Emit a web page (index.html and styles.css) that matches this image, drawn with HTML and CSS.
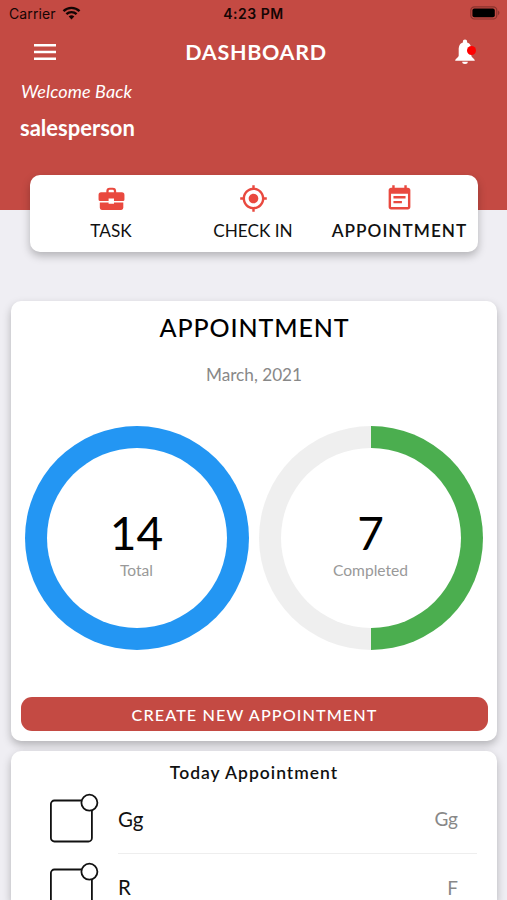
FILE: index.html
```html
<!DOCTYPE html>
<html lang="en">
<head>
    <meta charset="UTF-8">
    <meta name="viewport" content="width=device-width, initial-scale=1.0">
    <title>Dashboard</title>
    <link rel="stylesheet" href="styles.css">
</head>
<body>
    <header class="header">
        <div class="status-bar">
            <div class="carrier">
                <span>Carrier</span>
                <svg class="wifi" viewBox="0 0 18 14">
                    <path d="M1 5.2a11.4 11.4 0 0 1 16 0" />
                    <path d="M3.9 8.2a7.2 7.2 0 0 1 10.2 0" />
                    <path class="wifi-dot" d="M6.2 10.6a4 4 0 0 1 5.6 0L9 13.6z" />
                </svg>
            </div>
            <div class="time">4:23 PM</div>
            <div class="battery-box">
                <svg class="battery" viewBox="0 0 30 14">
                    <rect class="battery-case" x=".8" y=".8" width="26" height="12.2" rx="3.6" />
                    <rect x="2.4" y="2.6" width="22.4" height="8.6" rx="2" />
                    <path class="battery-tip" d="M28 4.6c2 1 2 3.6 0 4.6z" />
                </svg>
            </div>
        </div>

        <div class="nav-bar">
            <svg class="menu-icon" viewBox="0 0 22 16">
                <path d="M0 1.3h22M0 8h22M0 14.7h22" />
            </svg>
            <h1>DASHBOARD</h1>
            <div class="bell">
                <svg viewBox="0 0 22 26">
                    <path d="M11 .5c-1.3 0-2.100.9-2.100 2.100v1C5.600 4.500 4.700 7.500 4.700 11v5.500C4.700 18.500 1.200 19.500 1.200 21.800h19.600c0-2.300-3.500-3.300-3.500-5.300V11c0-3.500-.9-6.500-4.200-7.400v-1C13.100 1.400 12.300.5 11 .5zM8.200 22.800a2.800 2.200 0 0 0 5.600 0z" />
                </svg>
                <span class="bell-dot"></span>
            </div>
        </div>

        <p class="welcome">Welcome Back</p>
        <p class="username">salesperson</p>
    </header>

    <nav class="tabs">
        <a class="tab">
            <svg viewBox="0 0 28 28">
                <path d="M9 8V6.800A3.300 3.300 0 0 1 12.300 3.500h2.900a3.300 3.300 0 0 1 3.300 3.300V8H24A2.500 2.500 0 0 1 26.500 10.500V15a1.500 1.500 0 0 1-1.500 1.500h-8.600v-2.600h-5.200v2.600H3A1.500 1.500 0 0 1 1.500 15v-4.500A2.500 2.500 0 0 1 4 8zm2.200 0h5.100V6.800A1.300 1.300 0 0 0 15 5.500h-2.500a1.300 1.300 0 0 0-1.300 1.300z" />
                <path d="M2.700 17.800h8.500v1.200h5.200v-1.200h9V23a2 2 0 0 1-2 2H4.700a2 2 0 0 1-2-2z" />
            </svg>
            <span>TASK</span>
        </a>
        <a class="tab">
            <svg viewBox="0 0 24 24">
                <path d="M12 8c-2.210 0-4 1.790-4 4s1.790 4 4 4 4-1.790 4-4-1.790-4-4-4zm8.940 3c-.46-4.170-3.770-7.480-7.940-7.940V1h-2v2.060C6.830 3.520 3.520 6.830 3.060 11H1v2h2.060c.46 4.170 3.770 7.480 7.940 7.940V23h2v-2.060c4.170-.46 7.480-3.770 7.940-7.940H23v-2h-2.060zM12 19c-3.870 0-7-3.130-7-7s3.130-7 7-7 7 3.130 7 7-3.130 7-7 7z" />
            </svg>
            <span>CHECK IN</span>
        </a>
        <a class="tab active">
            <svg viewBox="0 0 24 24">
                <path d="M17 10H7v2h10v-2zm2-7h-1V1h-2v2H8V1H6v2H5c-1.110 0-1.990.9-1.990 2L3 19c0 1.100.89 2 2 2h14c1.100 0 2-.9 2-2V5c0-1.100-.9-2-2-2zm0 16H5V8h14v11zm-5-5H7v2h7v-2z" />
            </svg>
            <span>APPOINTMENT</span>
        </a>
    </nav>

    <main>
        <section class="card summary">
            <h2>APPOINTMENT</h2>
            <p class="month">March, 2021</p>
            <div class="charts">
                <div class="ring total">
                    <div class="ring-inner">
                        <span class="count">14</span>
                        <span class="label">Total</span>
                    </div>
                </div>
                <div class="ring completed">
                    <div class="ring-inner">
                        <span class="count">7</span>
                        <span class="label">Completed</span>
                    </div>
                </div>
            </div>
            <button class="create">CREATE NEW APPOINTMENT</button>
        </section>

        <section class="card today">
            <h3>Today Appointment</h3>
            <div class="row">
                <svg class="item-icon" viewBox="0 0 50 50">
                    <rect x="1.900" y="7.500" width="41" height="41" rx="3.500" />
                    <circle cx="40.400" cy="9.700" r="8" />
                </svg>
                <div class="row-body">
                    <span>Gg</span>
                    <span class="note">Gg</span>
                </div>
            </div>
            <div class="row">
                <svg class="item-icon" viewBox="0 0 50 50">
                    <rect x="1.900" y="7.500" width="41" height="41" rx="3.500" />
                    <circle cx="40.400" cy="9.700" r="8" />
                </svg>
                <div class="row-body">
                    <span>R</span>
                    <span class="note">F</span>
                </div>
            </div>
        </section>
    </main>
</body>
</html>
```
FILE: styles.css
```css
* {
    box-sizing: border-box;
}
body {
    margin: 0;
    height: 900px;
    overflow: hidden;
    background-color: #efeef3;
    font-family: Lato, sans-serif;
    color: #111;
}
h1, h2, h3, p {
    margin: 0;
}
.header {
    height: 210px;
    background-color: #c44a43;
    color: #fff;
}
.status-bar {
    display: grid;
    grid-template-columns: 1fr auto 1fr;
    align-items: center;
    height: 28px;
    padding: 0 6px 2px 9px;
    font-family: Inter, sans-serif;
    font-size: 14px;
    color: #140504;
}
.carrier {
    display: flex;
    align-items: center;
    gap: 6px;
    letter-spacing: 0.1px;
}
.wifi {
    width: 19px;
    height: 14px;
    margin-top: -1px;
    fill: none;
    stroke: #140504;
    stroke-width: 2.4;
}
.wifi-dot {
    fill: #140504;
    stroke: none;
}
.time {
    margin-right: 3px;
    font-weight: 600;
    letter-spacing: 0.5px;
}
.battery-box {
    display: flex;
    justify-content: flex-end;
}
.battery {
    width: 32px;
    height: 14px;
}
.battery-case {
    fill: none;
    stroke: #8a332e;
    stroke-width: 1.2;
}
.battery-tip {
    fill: #8a332e;
}
.nav-bar {
    display: flex;
    justify-content: space-between;
    align-items: center;
    height: 48px;
    padding: 0 31px 0 34px;
}
.menu-icon {
    width: 22px;
    height: 16px;
    stroke: #fff;
    stroke-width: 2.4;
}
h1 {
    padding-left: 2px;
    font-size: 21.5px;
    font-weight: 700;
    letter-spacing: 0.7px;
}
.bell {
    position: relative;
    width: 22px;
    height: 26px;
}
.bell svg {
    display: block;
    fill: #fff;
}
.bell-dot {
    position: absolute;
    top: 7px;
    right: 0;
    width: 9px;
    height: 9px;
    border-radius: 50%;
    background-color: #f00;
}
.welcome {
    padding: 4px 21px 0;
    font-size: 18px;
    font-style: italic;
    letter-spacing: 0.1px;
    line-height: 22px;
}
.username {
    padding: 12px 20px 0;
    font-size: 22px;
    font-weight: 700;
    line-height: 28px;
}
.tabs {
    position: relative;
    display: grid;
    grid-template-columns: 142px 142px 1fr;
    width: 448px;
    height: 77px;
    margin: -35px auto 49px 30px;
    padding: 9px 3px 0 10px;
    background-color: #fff;
    border-radius: 10px;
    box-shadow: 0 4px 8px rgba(0, 0, 0, 0.25);
}
.tab {
    display: flex;
    flex-direction: column;
    align-items: center;
    gap: 6px;
    font-size: 17.2px;
    line-height: 24px;
    white-space: nowrap;
}
.tab svg {
    width: 29px;
    height: 29px;
    fill: #e9493f;
}
.tab.active {
    font-weight: 600;
    letter-spacing: 1px;
}
.card {
    margin: 0 10px 10px 11px;
    background-color: #fff;
    border-radius: 10px;
    box-shadow: 0 4px 8px rgba(0, 0, 0, 0.25);
    text-align: center;
}
.summary {
    height: 440px;
    padding: 10px 9px 0 10px;
}
h2 {
    font-size: 25px;
    font-weight: 500;
    letter-spacing: 0.9px;
    line-height: 32px;
    color: #000;
}
.month {
    margin: 20px 1px 0 0;
    font-size: 17.2px;
    line-height: 24px;
    color: #888;
}
.charts {
    display: flex;
    gap: 10px;
    margin: 39px 4px 47px;
}
.ring {
    width: 224px;
    height: 224px;
    padding: 22px;
    border-radius: 50%;
}
.total {
    background-color: #2396f3;
}
.completed {
    background: conic-gradient(#4bae4f 50%, #efefef 50%);
}
.ring-inner {
    display: flex;
    flex-direction: column;
    align-items: center;
    height: 180px;
    padding: 57px 1px 0 0;
    border-radius: 50%;
    background-color: #fff;
}
.count {
    font-size: 46px;
    line-height: 55px;
    color: #000;
}
.label {
    font-size: 15.6px;
    line-height: 20px;
    color: #999;
}
.create {
    display: block;
    width: 100%;
    height: 34px;
    padding: 1px 0 0;
    border: none;
    border-radius: 11px;
    background-color: #c44a43;
    color: #fff;
    font-family: inherit;
    font-size: 16.2px;
    font-weight: 500;
    letter-spacing: 1.1px;
}
.today {
    height: 149px;
    margin-bottom: 0;
    padding: 10px 20px 0 38px;
    border-radius: 10px 10px 0 0;
    overflow: hidden;
}
h3 {
    margin-left: -18px;
    font-size: 17.5px;
    font-weight: 600;
    letter-spacing: 1px;
    line-height: 24px;
}
.row {
    display: flex;
    height: 68.5px;
}
.item-icon {
    width: 50px;
    height: 50px;
    margin: 8px 19px 0 0;
    fill: #fff;
    stroke: #111;
    stroke-width: 1.8;
}
.row-body {
    flex: 1;
    display: flex;
    justify-content: space-between;
    align-items: center;
    padding-right: 19px;
    border-bottom: 1px solid #eee;
    font-size: 20.5px;
}
.note {
    font-size: 19px;
    color: #888;
}
```
